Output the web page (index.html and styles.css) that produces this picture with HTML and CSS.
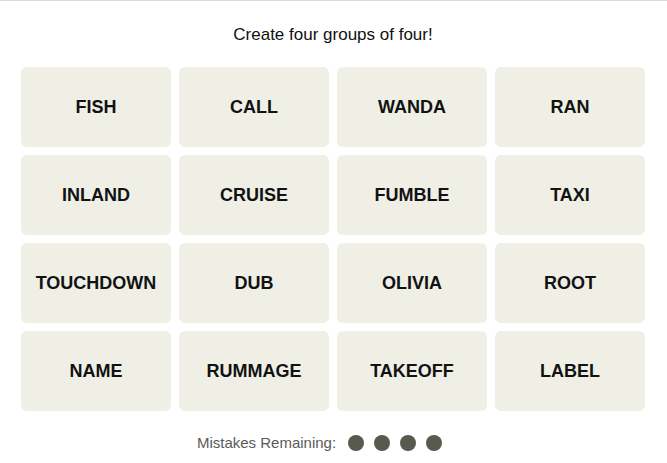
FILE: index.html
```html
<!DOCTYPE html>
<html>
<head>
<meta charset="utf-8">
<link rel="stylesheet" href="styles.css">
</head>
<body>
<div class="topline"></div>
<main class="game">
  <p class="prompt">Create four groups of four!</p>
  <div class="board">
    <button class="tile">FISH</button>
    <button class="tile">CALL</button>
    <button class="tile">WANDA</button>
    <button class="tile">RAN</button>
    <button class="tile">INLAND</button>
    <button class="tile">CRUISE</button>
    <button class="tile">FUMBLE</button>
    <button class="tile">TAXI</button>
    <button class="tile">TOUCHDOWN</button>
    <button class="tile">DUB</button>
    <button class="tile">OLIVIA</button>
    <button class="tile">ROOT</button>
    <button class="tile">NAME</button>
    <button class="tile">RUMMAGE</button>
    <button class="tile">TAKEOFF</button>
    <button class="tile">LABEL</button>
  </div>
  <div class="mistakes">
    <span class="mistakes-label">Mistakes Remaining:</span>
    <span class="dots">
      <span class="dot"></span><span class="dot"></span><span class="dot"></span><span class="dot"></span>
    </span>
  </div>
</main>
</body>
</html>
```
FILE: styles.css
```css
html, body {
  margin: 0;
  padding: 0;
  background: #ffffff;
}
body {
  font-family: "Liberation Sans", Arial, sans-serif;
  color: #121212;
}
.topline {
  height: 1px;
  background: #dcdcdc;
}
.game {
  width: 624px;
  margin: 0 0 0 21px;
  display: flex;
  flex-direction: column;
  align-items: center;
}
.prompt {
  margin: 24px 0 0 0;
  height: 20px;
  line-height: 20px;
  font-size: 17px;
  font-weight: normal;
  color: #121212;
}
.board {
  margin-top: 22px;
  width: 624px;
  display: grid;
  grid-template-columns: repeat(4, 150px);
  grid-auto-rows: 80px;
  gap: 8px;
}
.tile {
  border: none;
  border-radius: 6px;
  background: #efefe6;
  font-family: "Liberation Sans", Arial, sans-serif;
  font-weight: bold;
  font-size: 18px;
  color: #121212;
  display: flex;
  align-items: center;
  justify-content: center;
  padding: 0;
  margin: 0;
}
.mistakes {
  margin-top: 23px;
  padding-right: 27px;
  display: flex;
  align-items: center;
  gap: 12px;
  height: 18px;
}
.mistakes-label {
  font-size: 15px;
  color: #5a5a5a;
  line-height: 18px;
}
.dots {
  display: flex;
  gap: 10px;
}
.dot {
  width: 16px;
  height: 16px;
  border-radius: 50%;
  background: #5a594e;
}
```
